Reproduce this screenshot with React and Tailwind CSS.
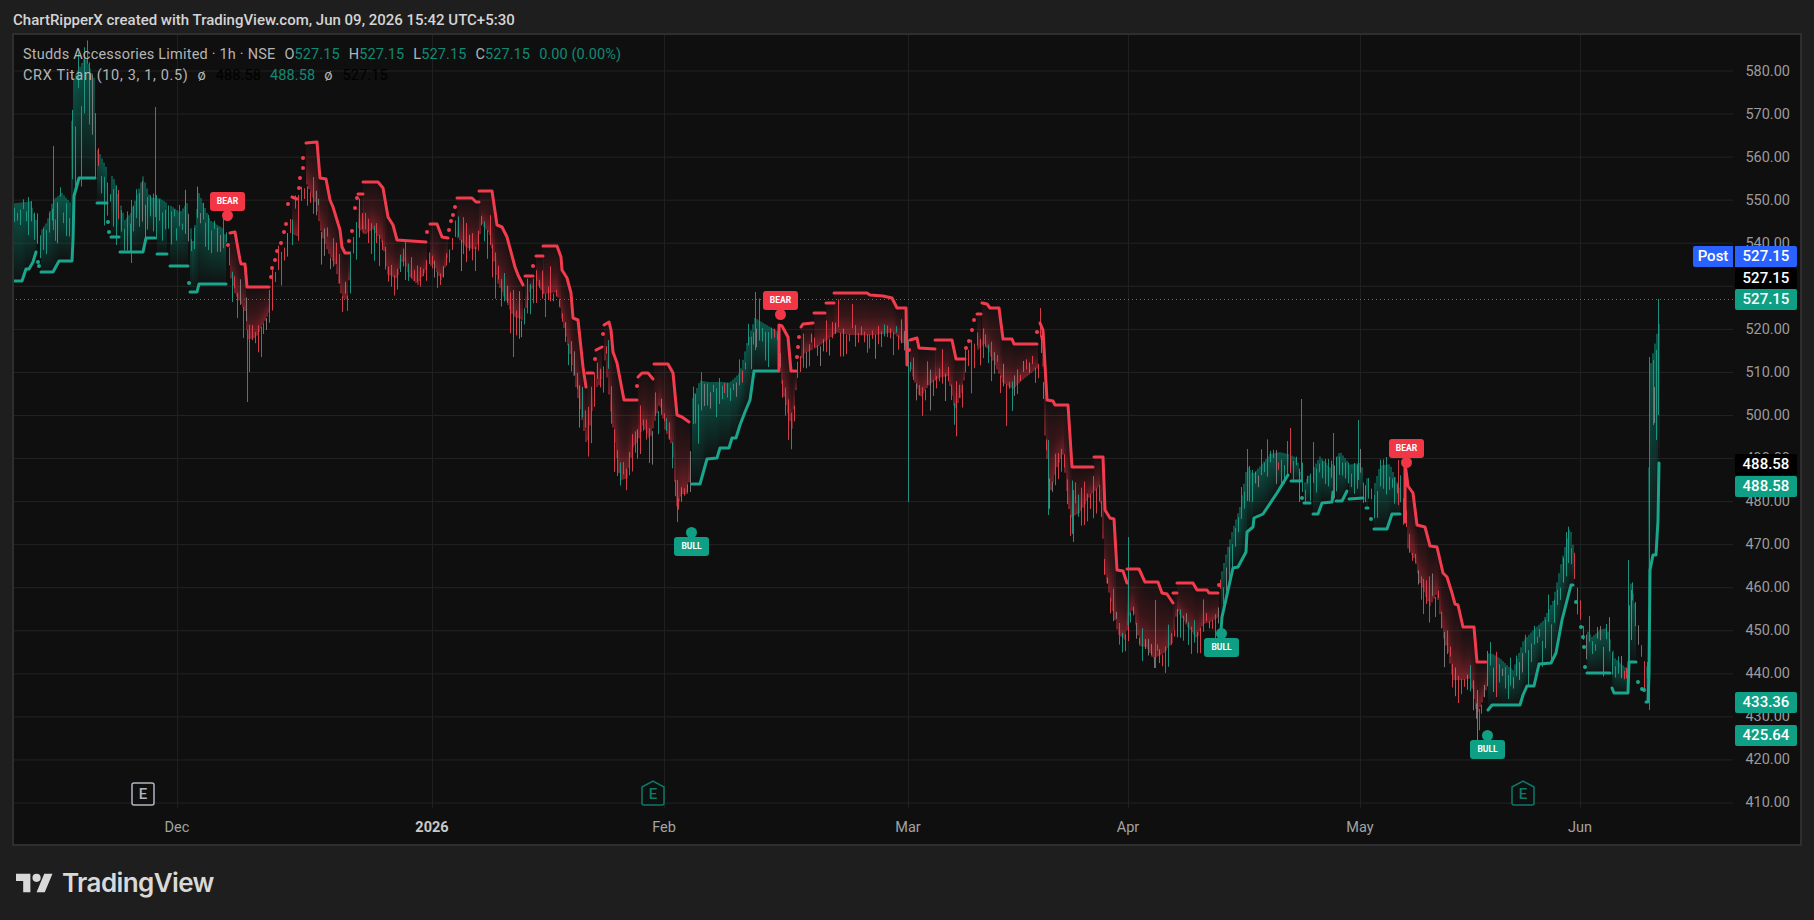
import React from 'react';

const PRICES = ['580.00', '570.00', '560.00', '550.00', '540.00', '530.00', '520.00', '510.00', '500.00', '490.00', '480.00', '470.00', '460.00', '450.00', '440.00', '430.00', '420.00', '410.00'];
const GRID_X = [177, 432, 664, 908, 1128, 1360, 1580];
const GRID_Y = PRICES.map((_, i) => 71 + i * 43.06);

// price envelope, read off the chart: [x, high y, low y]
const ENVELOPE = [
  [13, 198, 225], [30, 195, 228], [40, 225, 262], [47, 215, 250], [53, 190, 240], [62, 185, 225], [70, 195, 232], [73, 60, 160],
  [85, 34, 150], [95, 60, 160], [98, 140, 190], [107, 160, 205], [115, 170, 222], [119, 190, 232], [125, 215, 240], [131, 205, 245],
  [143, 165, 222], [150, 190, 228], [160, 190, 232], [170, 195, 245], [180, 205, 242], [187, 195, 236], [193, 235, 265], [199, 180, 246],
  [210, 215, 242], [223, 225, 242], [229, 235, 290], [235, 262, 310], [245, 285, 325], [248, 320, 350], [256, 327, 343], [265, 313, 325],
  [270, 280, 327], [273, 273, 290], [282, 243, 272], [290, 207, 247], [298, 187, 263], [307, 143, 207], [315, 187, 210], [322, 203, 253],
  [328, 213, 273], [335, 230, 283], [342, 263, 317], [347, 283, 308], [352, 223, 267], [358, 197, 243], [365, 203, 252], [373, 207, 240],
  [383, 237, 247], [387, 263, 280], [397, 263, 287], [403, 243, 267], [410, 263, 285], [418, 263, 297], [425, 250, 282], [433, 253, 270],
  [442, 267, 290], [448, 240, 260], [457, 213, 250], [467, 220, 263], [477, 230, 260], [482, 207, 233], [490, 220, 243], [497, 247, 300],
  [507, 280, 315], [513, 290, 330], [523, 293, 335], [530, 263, 307], [537, 253, 297], [543, 270, 307], [557, 283, 297], [563, 317, 327],
  [570, 330, 367], [582, 370, 447], [587, 387, 480], [595, 363, 403], [600, 360, 397], [605, 337, 373], [612, 377, 443], [620, 450, 497],
  [627, 447, 495], [633, 437, 453], [638, 407, 460], [643, 417, 430], [650, 420, 450], [653, 373, 458], [660, 393, 407], [665, 410, 440],
  [672, 437, 450], [677, 477, 522], [682, 483, 500], [688, 483, 500], [692, 380, 483], [700, 370, 423], [710, 377, 403], [720, 378, 397],
  [730, 380, 393], [740, 370, 383], [747, 337, 367], [755, 310, 350], [765, 320, 340], [777, 327, 347], [783, 373, 403], [788, 377, 433],
  [792, 380, 455], [797, 357, 393], [803, 337, 363], [817, 330, 357], [827, 327, 347], [837, 313, 343], [850, 320, 343], [867, 327, 340],
  [883, 323, 340], [893, 323, 337], [905, 330, 353], [908, 340, 365], [912, 367, 377], [920, 380, 407], [930, 367, 393], [940, 367, 383],
  [948, 363, 383], [955, 387, 423], [962, 380, 400], [968, 340, 363], [977, 327, 363], [985, 320, 357], [993, 343, 370], [1003, 363, 393],
  [1013, 363, 403], [1023, 360, 390], [1037, 347, 380], [1042, 323, 337], [1045, 403, 453], [1050, 477, 503], [1057, 443, 480], [1063, 450, 457],
  [1070, 483, 537], [1080, 480, 530], [1090, 483, 503], [1100, 483, 487], [1105, 567, 578], [1118, 617, 643], [1125, 627, 647], [1130, 607, 620],
  [1133, 600, 613], [1140, 633, 653], [1147, 637, 653], [1153, 643, 667], [1163, 643, 660], [1172, 630, 650], [1177, 597, 617], [1187, 613, 633],
  [1197, 630, 643], [1203, 613, 630], [1210, 613, 627], [1218, 607, 623], [1222, 560, 617], [1227, 543, 580], [1232, 527, 553], [1240, 503, 523],
  [1247, 457, 503], [1253, 470, 490], [1260, 463, 480], [1270, 450, 470], [1280, 447, 473], [1290, 450, 473], [1297, 457, 463], [1303, 483, 497],
  [1310, 470, 490], [1320, 450, 483], [1330, 460, 497], [1340, 447, 470], [1350, 460, 483], [1360, 457, 487], [1367, 473, 500], [1372, 487, 520],
  [1380, 457, 500], [1390, 457, 493], [1400, 487, 503], [1405, 493, 520], [1408, 540, 553], [1415, 553, 563], [1420, 570, 590], [1430, 580, 620],
  [1437, 580, 600], [1443, 620, 643], [1448, 633, 663], [1453, 667, 687], [1463, 667, 687], [1470, 670, 683], [1477, 690, 727], [1483, 687, 707],
  [1488, 640, 707], [1493, 647, 683], [1500, 653, 680], [1508, 660, 690], [1513, 667, 683], [1523, 637, 660], [1533, 623, 660], [1543, 613, 653],
  [1553, 593, 633], [1560, 560, 603], [1570, 517, 560], [1577, 563, 600], [1582, 620, 640], [1592, 633, 653], [1600, 623, 657], [1607, 620, 660],
  [1615, 653, 680], [1627, 667, 677], [1630, 560, 653], [1635, 597, 630], [1640, 637, 660], [1647, 663, 680], [1650, 350, 440], [1659, 300, 420],
];

const BULL_LINES = [
  [[13, 281], [22, 281], [26, 269], [29, 269], [33, 262], [36, 252]],
  [[41, 272], [53, 272], [59, 261], [72, 261], [73, 240], [74, 196], [79, 178], [95, 178]],
  [[97, 203], [107, 203]],
  [[111, 237], [119, 237]],
  [[120, 252], [143, 252], [146, 238], [155, 238]],
  [[157, 254], [167, 254]],
  [[170, 266], [188, 266]],
  [[190, 292], [197, 292], [199, 284], [226, 284]],
  [[692, 484], [700, 484], [707, 459], [717, 458], [720, 448], [729, 448], [732, 438], [736, 438], [740, 425], [745, 412], [750, 400], [754, 371], [778, 371]],
  [[1221, 630], [1222, 617], [1233, 568], [1238, 567], [1246, 552], [1247, 532], [1253, 527], [1254, 518], [1263, 514], [1267, 508], [1277, 493], [1288, 475]],
  [[1291, 481], [1301, 481]],
  [[1304, 503], [1310, 503]],
  [[1313, 514], [1318, 514], [1322, 503], [1332, 502], [1333, 492]],
  [[1336, 501], [1342, 501], [1347, 491]],
  [[1349, 499], [1363, 498]],
  [[1366, 508], [1368, 508]],
  [[1374, 529], [1387, 529], [1392, 514], [1400, 514]],
  [[1488, 710], [1492, 705], [1520, 705], [1523, 695], [1527, 686], [1534, 686], [1539, 664], [1551, 663], [1556, 653], [1562, 620], [1571, 585], [1573, 585]],
  [[1587, 673], [1610, 673]],
  [[1612, 688], [1614, 693], [1628, 693], [1629, 662], [1636, 662]],
  [[1646, 702], [1648, 702], [1649, 673], [1650, 570], [1653, 555], [1656, 555], [1658, 520], [1659, 463]],
];

const BEAR_LINES = [
  [[230, 233], [235, 232], [240, 260], [241, 264], [245, 264], [247, 287], [269, 287]],
  [[292, 197], [297, 199]],
  [[306, 143], [317, 142], [320, 178], [326, 179], [330, 200], [333, 207], [340, 230], [342, 247], [345, 253], [349, 253]],
  [[358, 194], [363, 194]],
  [[363, 182], [378, 182], [383, 188], [388, 217], [393, 225], [397, 240], [426, 242]],
  [[430, 224], [437, 224], [442, 237], [448, 238]],
  [[457, 198], [472, 198], [476, 202], [479, 202]],
  [[479, 191], [492, 191], [497, 225], [502, 227], [507, 237], [515, 267], [518, 275], [523, 285]],
  [[525, 276], [533, 276]],
  [[536, 256], [543, 256]],
  [[543, 246], [557, 246], [561, 257], [562, 270], [567, 278], [571, 293], [573, 318], [578, 320], [583, 367], [586, 387]],
  [[587, 373], [593, 373]],
  [[596, 350], [602, 347]],
  [[604, 325], [609, 322], [611, 330], [613, 352], [617, 363], [624, 400], [637, 400]],
  [[638, 377], [642, 373], [648, 373], [653, 379]],
  [[654, 364], [668, 364], [673, 373], [677, 415], [682, 417], [689, 422]],
  [[779, 371], [779, 325], [782, 326], [788, 337], [791, 371], [796, 371]],
  [[801, 327], [803, 324], [813, 323]],
  [[814, 313], [825, 313]],
  [[826, 303], [834, 303]],
  [[834, 293], [867, 293], [870, 295], [883, 296], [892, 298], [897, 308], [906, 308], [907, 365]],
  [[910, 340], [917, 338], [919, 348], [935, 349]],
  [[935, 340], [952, 340], [956, 359], [965, 359]],
  [[977, 314], [981, 314]],
  [[982, 303], [987, 304], [990, 308], [999, 308], [1003, 339], [1012, 339], [1014, 344], [1037, 344]],
  [[1040, 323], [1043, 330], [1047, 400], [1053, 401], [1055, 405], [1068, 405], [1072, 467], [1093, 467]],
  [[1094, 457], [1103, 457], [1105, 510], [1110, 518], [1114, 519], [1117, 570], [1123, 571], [1127, 583]],
  [[1127, 569], [1139, 569], [1145, 582], [1158, 582], [1162, 593], [1167, 594], [1173, 603]],
  [[1173, 593], [1177, 593]],
  [[1177, 583], [1193, 583], [1197, 590], [1207, 590], [1209, 593], [1218, 593]],
  [[1405, 522], [1405, 463], [1408, 486], [1413, 493], [1417, 525], [1425, 527], [1430, 546], [1437, 547], [1443, 573], [1447, 577], [1452, 593], [1455, 604], [1458, 605], [1463, 627], [1474, 627], [1477, 662], [1486, 662]],
];

const BULL_DOTS = [[38, 262], [39, 266], [108, 222], [109, 232], [189, 283], [1302, 498], [1371, 519], [1576, 602], [1581, 627], [1583, 637], [1584, 647], [1585, 667], [1638, 682], [1642, 689], [1644, 690]];
const BEAR_DOTS = [
  [228, 245], [271, 277], [272, 268], [275, 260], [277, 251], [281, 243], [284, 232], [286, 224], [288, 204], [299, 188], [300, 178], [303, 168], [303, 158],
  [349, 241], [352, 231], [355, 208], [357, 198], [427, 232], [449, 230], [451, 221], [453, 215], [455, 207], [533, 266], [595, 359], [603, 334], [637, 386],
  [797, 357], [798, 347], [799, 337], [909, 350], [966, 348], [969, 341], [972, 330], [974, 320], [1037, 332], [1219, 585],
];

// long wicks that stick out of the cluster: [x, top, bottom, colour]
const SPIKES = [
  [53, 146, 230, 'g'], [155, 107, 217, 'r'], [131, 200, 263, 'r'], [247, 330, 402, 'r'], [249, 340, 372, 'g'], [513, 290, 357, 'r'], [677, 480, 522, 'g'],
  [755, 292, 350, 'g'], [908, 340, 502, 'g'], [1040, 308, 337, 'r'], [1048, 440, 515, 'g'], [1073, 490, 542, 'g'], [1128, 537, 633, 'g'], [1155, 600, 668, 'r'], [1247, 449, 500, 'g'],
  [1290, 428, 473, 'r'], [1301, 399, 480, 'g'], [1313, 442, 480, 'r'], [1333, 433, 500, 'r'], [1358, 420, 480, 'g'], [1398, 460, 505, 'r'], [1477, 690, 740, 'x'],
  [1628, 560, 670, 'g'], [1631, 590, 640, 'x'], [1649, 357, 710, 'g'], [1653, 360, 425, 'r'], [1654, 387, 423, 'x'], [1656, 350, 440, 'g'], [1658, 299, 415, 'g'],
];

const lerp = (points, x, a) => {
  const next = points.findIndex((p) => p[0] >= x);
  if (next <= 0) return points[0][a];
  const p0 = points[next - 1];
  const p1 = points[next];
  return p0[a] + ((p1[a] - p0[a]) * (x - p0[0])) / (p1[0] - p0[0] || 1);
};

const isBull = (x) => x < 227 || (x >= 692 && x < 779) || (x >= 1221 && x < 1405) || x >= 1488;

let seed = 4217;
const rand = () => {
  seed = (seed * 16807) % 2147483647;
  return (seed % 10000) / 10000;
};

const buildWicks = () => {
  const wicks = { g: '', r: '', x: '' };
  for (let x = 14; x < 1648; x += 2.9) {
    const hi = lerp(ENVELOPE, x, 1);
    const lo = lerp(ENVELOPE, x, 2);
    const range = Math.max(lo - hi, 10);
    let top = hi + rand() * range * 0.7;
    let bottom = top + 6 + rand() * range * 0.65;
    // every so often a wick reaches out past the cluster
    if (rand() < 0.2) top -= 4 + rand() * 14;
    if (rand() < 0.2) bottom += 4 + rand() * 18;
    const roll = rand();
    const key = isBull(x)
      ? (roll < 0.68 ? 'g' : roll < 0.86 ? 'x' : 'r')
      : (roll < 0.62 ? 'r' : roll < 0.84 ? 'x' : 'g');
    wicks[key] += `M${Math.round(x)}.5 ${top.toFixed(1)}V${bottom.toFixed(1)}`;
  }
  SPIKES.forEach(([x, y1, y2, key]) => {
    wicks[key] += `M${x}.5 ${y1}V${y2}`;
  });
  return wicks;
};

const buildFill = (lines, bull) => {
  const rects = [];
  lines.forEach((line) => {
    const start = line[0][0];
    const end = line[line.length - 1][0];
    for (let x = start; x < end; x += 2) {
      const mid = x + 1;
      const trend = lerp(line, mid, 1);
      const hi = lerp(ENVELOPE, mid, 1);
      const lo = lerp(ENVELOPE, mid, 2);
      const y1 = bull ? hi + (lo - hi) * 0.2 : trend;
      const y2 = bull ? trend : hi + (lo - hi) * 0.65;
      if (y2 - y1 > 1) rects.push([x, y1, y2]);
    }
  });
  return rects;
};

const WICKS = buildWicks();
const BULL_FILL = buildFill(BULL_LINES, true);
const BEAR_FILL = buildFill(BEAR_LINES, false);
const toPoints = (line) => line.map((p) => p.join(',')).join(' ');

const Trend = ({ lines, dots, color }) => (
  <g stroke={color} fill="none" strokeWidth="3" strokeLinejoin="round" strokeLinecap="round">
    {lines.map((line) => <polyline key={line[0].join()} points={toPoints(line)} />)}
    {dots.map(([x, y]) => <circle key={`${x}-${y}`} cx={x} cy={y} r="2" fill={color} stroke="none" />)}
  </g>
);

const Earnings = ({ x, house }) => {
  const color = house ? '#0b7a68' : '#b2b5be';
  const shape = house
    ? `M${x - 11} 787 L${x} 781 L${x + 11} 787 V803 Q${x + 11} 805 ${x + 9} 805 H${x - 9} Q${x - 11} 805 ${x - 11} 803 Z`
    : `M${x - 9} 783 H${x + 9} Q${x + 11} 783 ${x + 11} 785 V803 Q${x + 11} 805 ${x + 9} 805 H${x - 9} Q${x - 11} 805 ${x - 11} 803 V785 Q${x - 11} 783 ${x - 9} 783 Z`;
  return (
    <g>
      <path d={shape} fill="#0f0f0f" stroke={color} strokeWidth="1.5" />
      <text x={x} y="799" textAnchor="middle" fontSize="15" fontWeight="500" fontFamily="Roboto, sans-serif" fill={color}>E</text>
    </g>
  );
};

const Marker = ({ label, className }) => {
  const bull = label === 'BULL';
  const bg = bull ? 'bg-[#0e9f84]' : 'bg-[#f23645]';
  const dot = <div className={`w-[11px] h-[11px] rounded-full -my-[1px] ${bg}`} />;
  return (
    <div className={`absolute w-[35px] flex flex-col items-center ${className}`}>
      {bull && dot}
      <div className={`w-full h-[19px] rounded-[3px] flex items-center justify-center text-white text-[8.5px] font-bold ${bg}`}>
        {label}
      </div>
      {!bull && dot}
    </div>
  );
};

const PriceTag = ({ className, children }) => (
  <div className={`absolute left-[2px] w-[62px] h-[21px] rounded-[2px] flex items-center justify-center text-[15px] leading-none font-medium ${className}`}>
    {children}
  </div>
);

const Value = ({ children }) => <span className="text-[#0f8a75]">{children}</span>;

const Legend = () => (
  <div className="absolute left-[9px] top-[9px] text-[14.5px] leading-[21px] text-[#b4b4b4] tracking-[0.1px]">
    <div className="flex">
      <span className="tracking-[0.2px]">Studds Accessories Limited · 1h · NSE</span>
      <span className="ml-[9px]">O<Value>527.15</Value></span>
      <span className="ml-[9px]">H<Value>527.15</Value></span>
      <span className="ml-[9px]">L<Value>527.15</Value></span>
      <span className="ml-[9px]">C<Value>527.15</Value></span>
      <span className="ml-[9px]"><Value>0.00 (0.00%)</Value></span>
    </div>
    <div className="flex">
      <span className="tracking-[0.65px]">CRX Titan (10, 3, 1, 0.5)</span>
      <span className="ml-[9px]">ø</span>
      <span className="ml-[10px] text-black">488.58</span>
      <span className="ml-[9px]"><Value>488.58</Value></span>
      <span className="ml-[9px]">ø</span>
      <span className="ml-[10px] text-black">527.15</span>
    </div>
  </div>
);

const Plot = () => (
  <svg className="absolute inset-0 w-full h-full" viewBox="14 35 1719 773">
    <defs>
      <linearGradient id="bullFill" x1="0" y1="0" x2="0" y2="1">
        <stop offset="0" stopColor="#089981" stopOpacity="0.5" />
        <stop offset="1" stopColor="#089981" stopOpacity="0.03" />
      </linearGradient>
      <linearGradient id="bearFill" x1="0" y1="0" x2="0" y2="1">
        <stop offset="0" stopColor="#f23645" stopOpacity="0.03" />
        <stop offset="0.55" stopColor="#f23645" stopOpacity="0.18" />
        <stop offset="1" stopColor="#f23645" stopOpacity="0.46" />
      </linearGradient>
    </defs>
    {GRID_Y.map((y) => <line key={y} x1="14" x2="1733" y1={y} y2={y} stroke="#232323" />)}
    {GRID_X.map((x) => <line key={x} x1={x + 0.5} x2={x + 0.5} y1="35" y2="808" stroke="#1f1f1f" />)}
    <line x1="16" x2="1733" y1="299.5" y2="299.5" stroke="#5a6aa0" strokeDasharray="1 3" />
    {BULL_FILL.map(([x, y1, y2]) => <rect key={x} x={x} y={y1} width="2" height={y2 - y1} fill="url(#bullFill)" />)}
    {BEAR_FILL.map(([x, y1, y2]) => <rect key={x} x={x} y={y1} width="2" height={y2 - y1} fill="url(#bearFill)" />)}
    <path d={WICKS.x} stroke="#8c8585" strokeOpacity="0.85" fill="none" />
    <path d={WICKS.g} stroke="#1f9f8a" strokeOpacity="0.9" fill="none" />
    <path d={WICKS.r} stroke="#e8404f" strokeOpacity="0.9" fill="none" />
    <Trend lines={BULL_LINES} dots={BULL_DOTS} color="#1aa68d" />
    <Trend lines={BEAR_LINES} dots={BEAR_DOTS} color="#f23c4d" />
    <Earnings x={143} />
    <Earnings x={653} house />
    <Earnings x={1523} house />
  </svg>
);

const Logo = () => (
  <div className="flex items-center gap-[9px] text-[#d9d9d9]">
    <svg width="37" height="20" viewBox="0 4 36 18" fill="currentColor">
      <path d="M14 22H7V11H0V4h14v18zM28 22h-8l7.5-18h8L28 22z" />
      <circle cx="20" cy="8" r="4" />
    </svg>
    <span className="text-[26px] leading-none font-semibold tracking-[-0.6px] font-['Inter',sans-serif]">TradingView</span>
  </div>
);

const App = () => (
  <div className="w-[1814px] h-[920px] overflow-hidden flex flex-col bg-[#1e1e1e] font-['Roboto',sans-serif]">
    <div className="h-[33px] pl-[13px] pt-[12px] text-[15px] leading-[16px] text-[#d4d4d4] font-medium">
      ChartRipperX created with TradingView.com, Jun 09, 2026 15:42 UTC+5:30
    </div>
    <div className="ml-[12px] w-[1790px] h-[813px] border-2 border-[#2e2e2e] bg-[#0f0f0f] flex flex-col">
      <div className="h-[773px] flex">
        <div className="relative w-[1719px] h-full">
          <Plot />
          <Legend />
          <Marker label="BEAR" className="left-[196px] top-[157px]" />
          <Marker label="BEAR" className="left-[749px] top-[256px]" />
          <Marker label="BEAR" className="left-[1375px] top-[404px]" />
          <Marker label="BULL" className="left-[660px] top-[493px]" />
          <Marker label="BULL" className="left-[1190px] top-[594px]" />
          <Marker label="BULL" className="left-[1456px] top-[696px]" />
        </div>
        <div className="relative w-[67px] h-[812px] pt-[15px] flex flex-col text-[14.5px] text-[#9b9b9b]">
          {PRICES.map((price) => (
            <div key={price} className="h-[43.06px] shrink-0 flex items-center justify-end pr-[10px]">{price}</div>
          ))}
          <div className="absolute right-full top-[211px] w-[40px] h-[21px] rounded-l-[2px] flex items-center justify-center bg-[#2962ff] text-white text-[15px] leading-none font-medium">Post</div>
          <PriceTag className="top-[211px] bg-[#2962ff] text-white rounded-l-none">527.15</PriceTag>
          <PriceTag className="top-[233px] bg-black text-white">527.15</PriceTag>
          <PriceTag className="top-[254px] bg-[#0e9f84] text-white">527.15</PriceTag>
          <PriceTag className="top-[419px] bg-black text-white">488.58</PriceTag>
          <PriceTag className="top-[441px] bg-[#0e9f84] text-white">488.58</PriceTag>
          <PriceTag className="top-[657px] bg-[#0e9f84] text-white">433.36</PriceTag>
          <PriceTag className="top-[690px] bg-[#0e9f84] text-white">425.64</PriceTag>
        </div>
      </div>
      <div className="relative w-[1719px] h-[36px] text-[14.5px] leading-[40px] text-[#a3a3a3]">
        <span className="absolute left-[163px] -translate-x-1/2">Dec</span>
        <span className="absolute left-[418px] -translate-x-1/2 font-bold text-[#c9c9c9]">2026</span>
        <span className="absolute left-[650px] -translate-x-1/2">Feb</span>
        <span className="absolute left-[894px] -translate-x-1/2">Mar</span>
        <span className="absolute left-[1114px] -translate-x-1/2">Apr</span>
        <span className="absolute left-[1346px] -translate-x-1/2">May</span>
        <span className="absolute left-[1566px] -translate-x-1/2">Jun</span>
      </div>
    </div>
    <div className="pl-[16px] pt-[24px]">
      <Logo />
    </div>
  </div>
);

export default App;
